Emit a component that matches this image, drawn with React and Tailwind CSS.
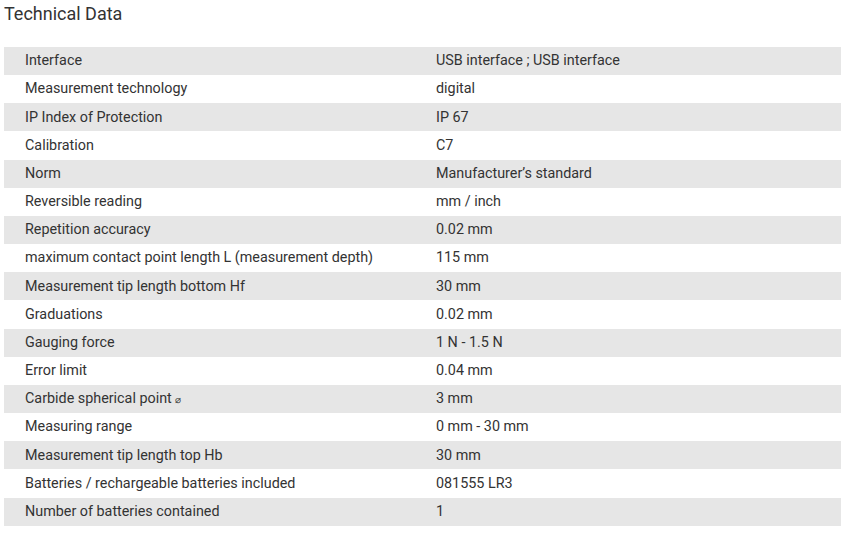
import React from "react";

const rows = [
  ["Interface", "USB interface ; USB interface"],
  ["Measurement technology", "digital"],
  ["IP Index of Protection", "IP 67"],
  ["Calibration", "C7"],
  ["Norm", "Manufacturer’s standard"],
  ["Reversible reading", "mm / inch"],
  ["Repetition accuracy", "0.02 mm"],
  ["maximum contact point length L (measurement depth)", "115 mm"],
  ["Measurement tip length bottom Hf", "30 mm"],
  ["Graduations", "0.02 mm"],
  ["Gauging force", "1 N - 1.5 N"],
  ["Error limit", "0.04 mm"],
  ["Carbide spherical point ⌀", "3 mm"],
  ["Measuring range", "0 mm - 30 mm"],
  ["Measurement tip length top Hb", "30 mm"],
  ["Batteries / rechargeable batteries included", "081555 LR3"],
  ["Number of batteries contained", "1"],
];

export default function App() {
  return (
    <div className="w-[848px] h-[534px] bg-white text-[#333] font-['Roboto',sans-serif]">
      <h2 className="pl-[4px] pt-[2px] text-[18px] leading-[24px] font-normal">Technical Data</h2>
      <div className="mt-[21px] ml-[4px] w-[837px]">
        {rows.map(([label, value], i) => (
          <div
            key={i}
            className={`flex items-center h-[28.16px] text-[14.35px] ${i % 2 === 0 ? "bg-[#e6e6e6]" : "bg-white"}`}
          >
            <div className="pl-[21px] w-[432px] shrink-0">
              {label.endsWith("⌀") ? (
                <>
                  {label.slice(0, -1)}
                  <span className="text-[10px]">⌀</span>
                </>
              ) : (
                label
              )}
            </div>
            <div>{value}</div>
          </div>
        ))}
      </div>
    </div>
  );
}
